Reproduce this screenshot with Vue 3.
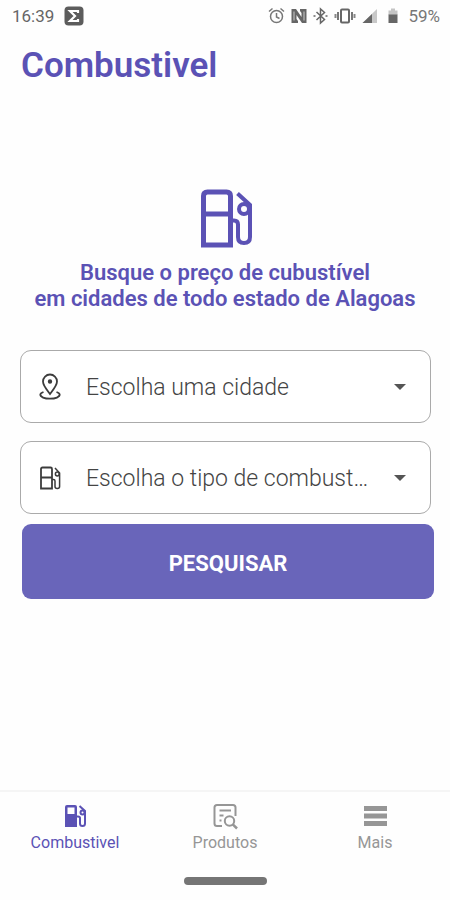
<script setup>
import { ref } from 'vue'

const city = ref('')
const fuel = ref('')
const cities = ['Maceió', 'Arapiraca', 'Penedo']
const fuels = ['Gasolina comum', 'Etanol', 'Diesel']
</script>

<template>
  <div class="screen">
    <div class="status">
      <div class="group left">
        <span>16:39</span>
        <svg width="20" height="20" viewBox="0 0 20 20" aria-hidden="true">
          <rect x="0.5" y="0.5" width="19" height="19" rx="4" fill="#5c5c5c" />
          <path d="M14 7V5H6l5 5-5 5h8v-2" fill="none" stroke="#fff" stroke-width="2.2" />
        </svg>
      </div>
      <div class="group right">
        <svg width="17" height="18" viewBox="0 0 17 18" fill="none" stroke="#777" stroke-width="1.5" aria-hidden="true">
          <circle cx="8.500" cy="9.500" r="6" />
          <path d="M1 4.500 4.500 1.500M16 4.500 12.500 1.500M8.500 6v4l3 1.500" />
        </svg>
        <svg width="16" height="18" viewBox="0 0 16 18" aria-hidden="true">
          <path d="M0.500 2H5l5.500 8V6L9 4V2h6.500v14H11L5.500 8v4L7 14v2H0.500z" fill="#666" />
          <path d="M3 4.500v9M13 4.500v9" fill="none" stroke="#ccc" stroke-width="1" />
        </svg>
        <svg width="15" height="18" viewBox="0 0 15 18" fill="none" stroke="#666" stroke-width="1.500" aria-hidden="true">
          <path d="M3.500 5l8 7.500-4 3.500V2l4 3.500L3.500 13M0.500 9h2M12.500 9h2" />
        </svg>
        <svg width="22" height="18" viewBox="0 0 22 18" aria-hidden="true">
          <rect x="7" y="2.500" width="8" height="13" rx="1" fill="none" stroke="#666" stroke-width="2" />
          <path d="M4 5v8M18 5v8" stroke="#777" stroke-width="2" />
          <path d="M1.500 7v4M20.500 7v4" stroke="#888" stroke-width="2" />
        </svg>
        <svg width="16" height="18" viewBox="0 0 16 18" aria-hidden="true">
          <path d="M0.500 16 15 2v14z" fill="#c8c8c8" />
          <path d="M0.500 16 10 7v9z" fill="#666" />
        </svg>
        <svg class="battery" width="10" height="18" viewBox="0 0 10 18" aria-hidden="true">
          <path d="M0.500 3.500H3V1.500h4v2h2.500V8h-9z" fill="#c4c4c4" />
          <path d="M0.500 7.500h9V16h-9z" fill="#666" />
        </svg>
        <span class="percent">59%</span>
      </div>
    </div>

    <h1>Combustivel</h1>

    <main>
      <svg class="hero" width="56" height="60" viewBox="0 0 56 60" fill="none" stroke="#5b52b5" stroke-width="5" aria-hidden="true">
        <path d="M4.500 57V8q0-4 4-4h19q4 0 4 4v49zM4.500 26h27" />
        <path d="M31.500 32.500H35q4 0 4 4V49q0 6 6 6t6-6V17L38.500 5.500" stroke-width="4" />
        <circle cx="45" cy="21" r="5" stroke-width="4" />
      </svg>
      <p class="intro">Busque o preço de cubustível<br>em cidades de todo estado de Alagoas</p>

      <form @submit.prevent>
        <div class="field">
          <svg class="icon" width="24" height="28" viewBox="0 0 24 28" fill="none" stroke="#3c3c3c" stroke-width="1.800" aria-hidden="true">
            <path d="M12 21C9 17 5 12.500 5 8.500a7 7 0 0 1 14 0C19 12.500 15 17 12 21z" />
            <circle cx="12" cy="8.500" r="1.300" fill="#3c3c3c" />
            <path d="M5.500 19C3.500 19.700 2.300 20.600 2.300 21.600 2.300 24 6.500 25.700 12 25.700s9.700-1.700 9.700-4.100c0-1-1.200-1.900-3.200-2.600" />
          </svg>
          <select v-model="city" aria-label="Cidade">
            <option value="">Escolha uma cidade</option>
            <option v-for="c in cities" :key="c">{{ c }}</option>
          </select>
          <svg class="arrow" width="12" height="6" viewBox="0 0 12 6" aria-hidden="true"><path d="M0 0h12L6 6z" fill="#555" /></svg>
        </div>
        <div class="field">
          <svg class="icon" width="24" height="28" viewBox="0 0 24 28" fill="none" stroke="#3c3c3c" stroke-width="1.800" aria-hidden="true">
            <path d="M3 24.500V5q0-1.500 1.500-1.500h8Q14 3.500 14 5v19.500zM3 13.500h11" />
            <path d="M14 15.500h1.500q1.500 0 1.500 1.500v5.500q0 2 2.300 2t2.300-2V9L17 4" stroke-width="1.500" />
            <circle cx="19.300" cy="10" r="1.900" stroke-width="1.500" />
          </svg>
          <select v-model="fuel" aria-label="Tipo de combustível">
            <option value="">Escolha o tipo de combustível</option>
            <option v-for="f in fuels" :key="f">{{ f }}</option>
          </select>
          <svg class="arrow" width="12" height="6" viewBox="0 0 12 6" aria-hidden="true"><path d="M0 0h12L6 6z" fill="#555" /></svg>
        </div>
        <button class="search" type="submit">PESQUISAR</button>
      </form>
    </main>

    <nav>
      <a class="active" href="#combustivel">
        <svg width="24" height="24" viewBox="0 0 24 24" fill="none" stroke="currentColor" aria-hidden="true">
          <path d="M2 23V3q0-2 2-2h8q2 0 2 2v20zM4.500 3.500V10h7V3.500z" fill="currentColor" fill-rule="evenodd" stroke="none" />
          <path d="M14 12.500h1q2 0 2 1.500v5.500q0 2.500 2.500 2.500t2.500-2.500V7L16.500 2" stroke-width="2" />
          <circle cx="19.500" cy="8.500" r="2" stroke-width="2" />
        </svg>
        <span>Combustivel</span>
      </a>
      <a href="#produtos">
        <svg width="26" height="24" viewBox="0 0 26 24" fill="none" stroke="currentColor" stroke-width="2" aria-hidden="true">
          <path d="M10 22H5q-2.500 0-2.500-2.500V3.500Q2.500 1 5 1h16q2.500 0 2.500 2.500V12M7.500 6.500h11.500M7.500 11.500h4M7.500 16.500h2" />
          <circle cx="17.500" cy="17" r="4.700" />
          <path d="M20.800 20.300 25 24.500" stroke-width="2.500" />
        </svg>
        <span>Produtos</span>
      </a>
      <a href="#mais">
        <svg width="24" height="24" viewBox="0 0 24 24" fill="currentColor" aria-hidden="true">
          <path d="M1 2h23v5H1zM1 9.500h23v5H1zM1 17h23v5H1z" />
        </svg>
        <span>Mais</span>
      </a>
    </nav>
    <div class="handle"></div>
  </div>
</template>

<style>
body {
  background: #fefefe;
}
</style>

<style scoped>
.screen {
  box-sizing: border-box;
  min-height: 100vh;
  display: flex;
  flex-direction: column;
  font-family: Roboto, "Liberation Sans", sans-serif;
  color: #5b52b5;
}

.status {
  display: flex;
  justify-content: space-between;
  height: 32px;
  padding: 0 10px 0 12px;
  font-size: 17px;
  color: #666;
}

.group {
  display: flex;
  align-items: center;
}

.left {
  gap: 10px;
}

.right {
  gap: 6px;
}

.battery {
  margin: 0 4px;
}

.percent {
  color: #777;
}

h1 {
  margin: 12px 21px 0;
  font-size: 35px;
  line-height: 44px;
  font-weight: 600;
}

main {
  flex: 1;
  display: flex;
  flex-direction: column;
  padding: 100px 16px 0 20px;
}

.hero {
  align-self: center;
}

.intro {
  margin: 12px 4px 0 0;
  font-size: 22px;
  line-height: 26px;
  font-weight: 600;
  text-align: center;
}

form {
  display: flex;
  flex-direction: column;
  margin-top: 38px;
}

.field {
  position: relative;
  display: flex;
  margin: 0 3px 18px 0;
}

.field:nth-child(2) {
  margin-bottom: 10px;
}

.icon,
.arrow {
  position: absolute;
  top: 50%;
  transform: translateY(-50%);
  pointer-events: none;
}

.icon {
  left: 18px;
}

.arrow {
  right: 25px;
}

select {
  flex: 1;
  min-width: 0;
  height: 73px;
  padding: 2px 60px 0 65px;
  appearance: none;
  border: 1px solid #aaa;
  border-radius: 11px;
  background: #fff;
  font-family: inherit;
  font-size: 23px;
  font-weight: 300;
  color: #444;
  text-overflow: ellipsis;
  white-space: nowrap;
  overflow: hidden;
}

.search {
  height: 75px;
  margin-left: 2px;
  padding: 4px 0 0;
  border: 0;
  border-radius: 9px;
  background: #6965ba;
  font-family: inherit;
  font-size: 22px;
  font-weight: 700;
  color: #fff;
}

nav {
  display: grid;
  grid-template-columns: repeat(3, 1fr);
  border-top: 2px solid #f5f5f5;
  padding: 12px 0 0;
}

nav a {
  display: flex;
  flex-direction: column;
  align-items: center;
  gap: 5px;
  font-size: 16px;
  line-height: 20px;
  color: #969696;
  text-decoration: none;
}

nav svg {
  overflow: visible;
}

nav a.active {
  color: #5b52b5;
}

.handle {
  align-self: center;
  width: 83px;
  height: 8px;
  margin: 24px 0 15px;
  border-radius: 4px;
  background: #757575;
}
</style>
